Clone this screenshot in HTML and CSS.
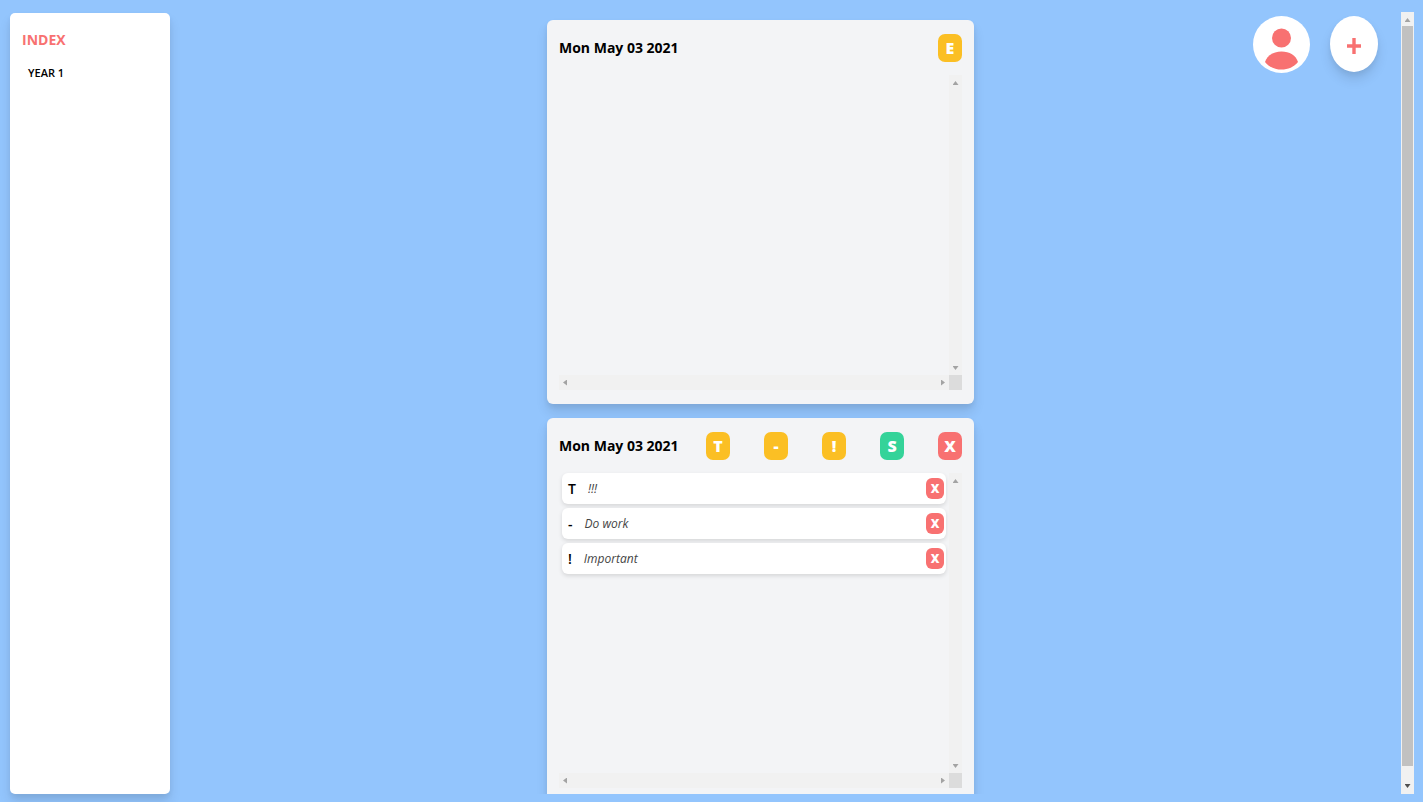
FILE: index.html
```html
<!DOCTYPE html>
<html lang="en">
<head>
<meta charset="utf-8">
<meta name="viewport" content="width=device-width, initial-scale=1">
<title>Journal</title>
<link rel="stylesheet" href="styles.css">
</head>
<body>
<div class="page">
  <nav class="sidebar">
    <h1 class="sidebar-title">INDEX</h1>
    <a class="sidebar-link" href="#year-1">YEAR 1</a>
  </nav>

  <main class="logs">
    <section class="card">
      <header class="card-header">
        <h2 class="card-title">Mon May 03 2021</h2>
        <button class="btn yellow" type="button">E</button>
      </header>
      <div class="scroll-area">
        <ul class="entries"></ul>
        <div class="bar bar-y" aria-hidden="true"><i class="arrow up"></i><i class="arrow down"></i></div>
        <div class="bar bar-x" aria-hidden="true"><i class="arrow left"></i><i class="arrow right"></i></div>
        <div class="corner"></div>
      </div>
    </section>

    <section class="card">
      <header class="card-header">
        <h2 class="card-title">Mon May 03 2021</h2>
        <button class="btn yellow" type="button">T</button>
        <button class="btn yellow" type="button">-</button>
        <button class="btn yellow" type="button">!</button>
        <button class="btn green" type="button">S</button>
        <button class="btn red" type="button">X</button>
      </header>
      <div class="scroll-area">
        <ul class="entries">
          <li class="entry"><b class="mark">T</b><em class="text">!!!</em><button class="btn small red" type="button">X</button></li>
          <li class="entry"><b class="mark">-</b><em class="text">Do work</em><button class="btn small red" type="button">X</button></li>
          <li class="entry"><b class="mark">!</b><em class="text">Important</em><button class="btn small red" type="button">X</button></li>
        </ul>
        <div class="bar bar-y" aria-hidden="true"><i class="arrow up"></i><i class="arrow down"></i></div>
        <div class="bar bar-x" aria-hidden="true"><i class="arrow left"></i><i class="arrow right"></i></div>
        <div class="corner"></div>
      </div>
    </section>
  </main>

  <div class="actions">
    <button class="avatar" type="button" aria-label="Profile">
      <svg viewBox="0 0 57 57" width="57" height="57" aria-hidden="true">
        <circle cx="28.500" cy="28.500" r="28.500" fill="#fff"/>
        <circle cx="28.500" cy="22" r="9.500" fill="#f87171"/>
        <path d="M12 46C14 39.500 20.500 35.500 28.500 35.500S43 39.500 45 46C41 51 35 53.500 28.500 53.500S16 51 12 46Z" fill="#f87171"/>
      </svg>
    </button>
    <button class="add" type="button" aria-label="Add">
      <svg viewBox="0 0 14 16" width="14" height="16" aria-hidden="true">
        <path d="M7 0V16M0 8H14" stroke="#f87171" stroke-width="3.400"/>
      </svg>
    </button>
  </div>

  <div class="page-bar" aria-hidden="true">
    <i class="arrow up"></i>
    <div class="thumb"></div>
    <i class="arrow down dark"></i>
  </div>
</div>
</body>
</html>
```

FILE: styles.css
```css
* { box-sizing: border-box; }

body {
  margin: 0;
  background: #93c5fd;
  color: #000;
  font-family: "Open Sans", "Noto Sans", sans-serif;
}

h1, h2, ul { margin: 0; padding: 0; }

button {
  border: 0;
  padding: 0;
  font: inherit;
  cursor: pointer;
}

.page {
  display: grid;
  grid-template-columns: 160px minmax(0, 377fr) minmax(0, 427fr) minmax(0, 427fr) 13px;
  grid-template-rows: minmax(0, 1fr);
  height: 100vh;
  padding: 12px 9px 8px 10px;
  overflow: hidden;
}

.sidebar {
  display: flex;
  flex-direction: column;
  align-items: flex-start;
  margin-top: 1px;
  padding: 17px 12px;
  border-radius: 5px;
  background: #fff;
  box-shadow: 0 8px 12px rgba(0, 0, 0, 0.1), 0 3px 5px rgba(0, 0, 0, 0.05);
}

.sidebar-title {
  color: #f87171;
  font-size: 14px;
  line-height: 20px;
  font-weight: 700;
}

.sidebar-link {
  margin: 15px 0 0 6px;
  color: #000;
  font-size: 11px;
  line-height: 16px;
  font-weight: 600;
  text-decoration: none;
}

.logs {
  grid-column: 3;
  display: flex;
  flex-direction: column;
  gap: 14px;
  margin: 0 -12px;
  padding: 8px 12px 0;
  overflow: hidden;
}

.card {
  flex: none;
  padding: 14px 12px;
  border-radius: 6px;
  background: #f3f4f6;
  box-shadow: 0 8px 12px rgba(0, 0, 0, 0.1), 0 3px 5px rgba(0, 0, 0, 0.06);
}

.card-header {
  display: flex;
  align-items: center;
  justify-content: flex-end;
  gap: 34px;
  margin-bottom: 13px;
}

.card-title {
  flex: 1;
  min-width: 0;
  font-size: 14px;
  line-height: 20px;
  font-weight: 700;
  white-space: nowrap;
}

.btn {
  flex: none;
  width: 24px;
  height: 28px;
  border-radius: 7px;
  color: #fff;
  font-size: 16px;
  line-height: 28px;
  font-weight: 800;
}

.yellow { background: #fbbf24; }
.green { background: #34d399; }
.red { background: #f87171; }

.small {
  width: 18px;
  height: 21px;
  border-radius: 6px;
  font-size: 12px;
  line-height: 20px;
}

.scroll-area {
  display: grid;
  grid-template-columns: minmax(0, 1fr) 13px;
  grid-template-rows: 300px 15px;
}

.entries {
  display: flex;
  flex-direction: column;
  gap: 4px;
  padding: 0 3px;
  list-style: none;
}

.entry {
  display: flex;
  align-items: center;
  height: 31px;
  padding: 0 2px 0 6px;
  border-radius: 6px;
  background: #fff;
  box-shadow: 0 2px 4px rgba(0, 0, 0, 0.12);
}

.mark {
  font-size: 14px;
  line-height: 20px;
  font-weight: 600;
}

.text {
  flex: 1;
  margin-left: 12px;
  color: #444;
  font-size: 12px;
  line-height: 20px;
}

.bar {
  display: flex;
  align-items: center;
  justify-content: space-between;
  background: #f1f1f1;
}

.bar-y { flex-direction: column; padding: 6px 0 5px; }
.bar-x { padding: 0 4px; }
.corner { background: #dcdcdc; }

.arrow {
  width: 6px;
  height: 4px;
  background: #a3a3a3;
}

.up { clip-path: polygon(50% 0, 100% 100%, 0 100%); }
.down { clip-path: polygon(0 0, 100% 0, 50% 100%); }
.left { width: 4px; height: 6px; clip-path: polygon(100% 0, 100% 100%, 0 50%); }
.right { width: 4px; height: 6px; clip-path: polygon(0 0, 100% 50%, 0 100%); }
.dark { background: #505050; }

.actions {
  display: flex;
  justify-content: flex-end;
  align-items: flex-start;
  gap: 20px;
  padding: 4px 23px 0 0;
}

.avatar {
  width: 57px;
  height: 57px;
  border-radius: 50%;
  background: transparent;
}

.avatar svg { display: block; }

.add {
  display: flex;
  align-items: center;
  justify-content: center;
  width: 48px;
  height: 56px;
  padding-top: 4px;
  border-radius: 50%;
  background: #fff;
  box-shadow: 0 8px 12px rgba(0, 0, 0, 0.1), 0 3px 5px rgba(0, 0, 0, 0.05);
}

.page-bar {
  display: flex;
  flex-direction: column;
  align-items: center;
  padding: 6px 1px;
  background: #f1f1f1;
}

.thumb {
  flex: 1;
  width: 100%;
  margin: 4px 0 18px;
  background: #c1c1c1;
}
```
